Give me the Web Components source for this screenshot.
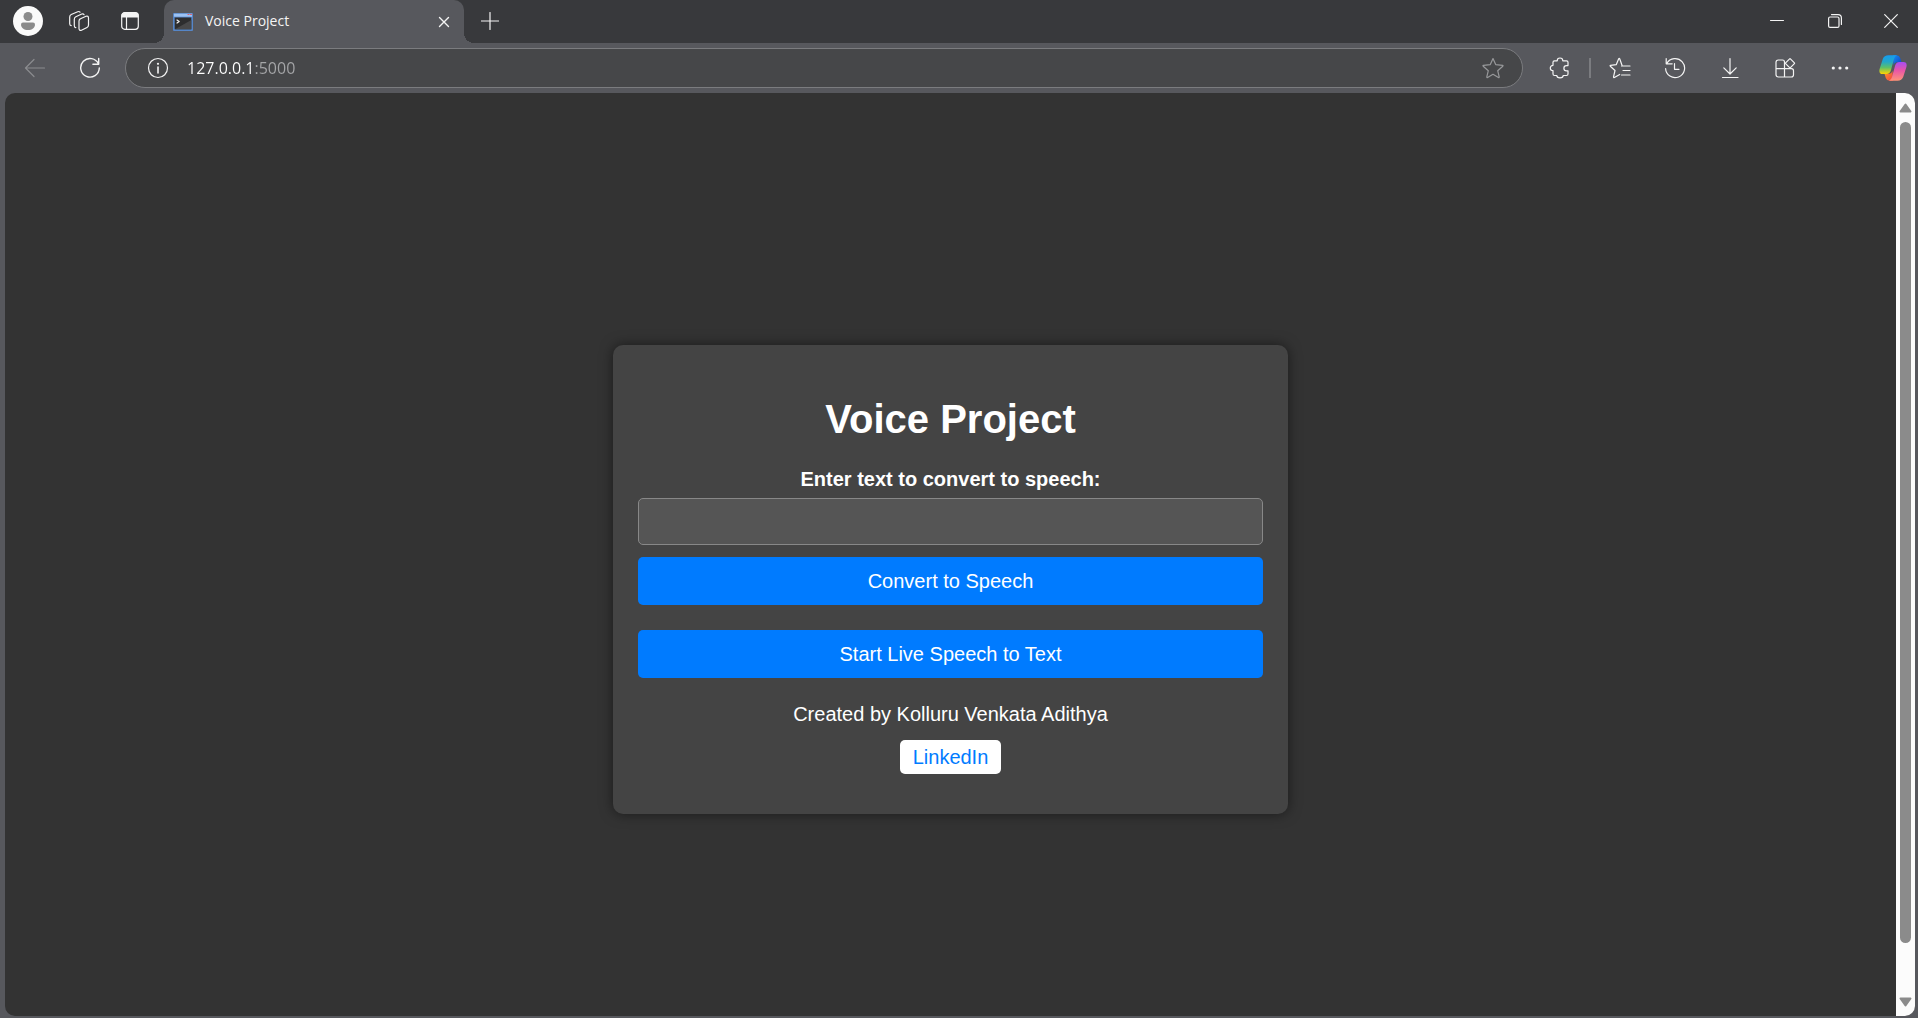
<!DOCTYPE html>
<html lang="en">
<head>
<meta charset="utf-8">
<title>Voice Project</title>
<style>
  html, body { height: 100%; margin: 0; }
  body { background: #57585d; overflow: hidden; }
</style>
</head>
<body>
<browser-window>
  <tab-strip slot="tabs"><browser-tab>Voice Project</browser-tab></tab-strip>
  <tool-bar slot="tools"></tool-bar>
  <page-view>
    <voice-card>
      <span slot="title">Voice Project</span>
      <span slot="author">Created by Kolluru Venkata Adithya</span>
    </voice-card>
  </page-view>
</browser-window>

<script>
const define = (name, html) => customElements.define(name, class extends HTMLElement {
  constructor() {
    super();
    this.attachShadow({ mode: 'open' }).innerHTML = html;
  }
});

const ICONS = {
  avatar: [30, 30, '<circle cx="15" cy="15" r="15" fill="#fafafa" stroke="none"/><circle cx="15" cy="10.500" r="4.500" fill="#8b8b8b" stroke="none"/><path d="M8 18.500a2 2 0 0 1 2-2h10a2 2 0 0 1 2 2c0 3.500-3 5.500-7 5.500s-7-2-7-5.500z" fill="#8b8b8b" stroke="none"/>'],
  collections: [22, 22, '<path d="M11.500 9.300 18 6.300q2.300-.8 2.500 1.700v7q0 1.800-1.500 2.500l-5.500 2.700q-2.300.8-2.500-1.700v-7.200q0-1.500.8-1.900z"/><path d="M7.800 17.700q-1.500-.4-1.500-2V9.200q0-1.800 1.500-2.500l6-2.700q1.500-.6 2.300.7"/><path d="M3.200 15.700q-1.500-.4-1.500-2V7q0-1.800 1.500-2.500L9.700 1.700q1.500-.6 2.300.5"/>'],
  panes: [20, 20, '<rect x="1.700" y="1.700" width="16.600" height="16.600" rx="3"/><path d="M2 4.500Q2 2 4.500 2h11Q18 2 18 4.500v1.500H2z" fill="currentColor"/><path d="M6.500 6v12"/>'],
  console: [20, 18, '<rect width="20" height="18" rx="1" fill="#5686c8" stroke="none"/><path d="M1 .7h18v3H1z" fill="#9cc2f2" stroke="none"/><path d="M15 1.500h1M17.500 1.500h1" stroke="#e0616c"/><path d="M1.700 4.500h16.600v11.800H1.700z" fill="#2d2d2e" stroke="none"/><path d="M2 16.200 18.300 7v9.200z" fill="#484849" stroke="none"/><path d="m4 7 2.200 1.500L4 10" stroke="#f0f0f0"/>'],
  tabclose: [12, 12, '<path d="m1.500 1.500 9 9M10.500 1.500l-9 9" stroke-width="1.400"/>'],
  plus: [18, 18, '<path d="M9 .5v17M.5 9h17"/>'],
  min: [14, 14, '<path d="M.5 6.500h13" stroke-width="1"/>'],
  restore: [14, 14, '<rect x=".6" y="3" width="10.400" height="10.400" rx="1.500" stroke-width="1.200"/><path d="M3.500.6H10Q13.400.6 13.400 4v6.500" stroke-width="1.200"/>'],
  close: [14, 14, '<path d="m.7.700 12.600 12.600M13.300.7.700 13.300" stroke-width="1.200"/>'],
  back: [22, 20, '<path d="M20.500 10h-19M10 1.500 1.500 10l8.500 8.500" stroke="#8b8c8f"/>'],
  reload: [22, 22, '<path d="M19.500 7A9.300 9.300 0 1 0 20.300 11M19.700 1.500v5.800h-5.800" stroke-width="1.400"/>'],
  info: [22, 22, '<circle cx="11" cy="11" r="9.500"/><path d="M11 10v6" stroke-width="1.600"/><circle cx="11" cy="6.800" r="1.100" fill="currentColor" stroke="none"/>'],
  star: [22, 22, '<path d="m11 1.500 2.700 6.100 6.900.7q.8.200.2.900l-5.100 4.500 1.500 6.200q.1 1-.8.600L11 17.300l-5.400 3.200q-.9.400-.8-.6l1.500-6.200L1.200 9.200q-.6-.7.200-.9l6.900-.7z" stroke="#97989a"/>'],
  puzzle: [22, 22, '<path d="M5.500 3.800h2.700a2.800 2.800 0 0 1 5.600 0h3.700q1.500 0 1.500 1.500v3.300h-1.500a2.600 2.600 0 0 0 0 5.200H19V17q0 1.500-1.500 1.500h-3.300a3.200 2.300 0 0 1-6.400 0H5.500Q4 18.500 4 17v-3.300a2.700 2.700 0 0 1 0-5.400V5.300Q4 3.800 5.500 3.800z"/>'],
  favs: [22, 22, '<path d="M13 8.300 10.700 1.800q-.5-.8-1 0L7.200 7.700l-5.600.6q-.9.300-.3.900l4.700 4.300-1.500 6.300q0 .9.900.7l5.300-3M12.500 9H21M14 13.500h7M12.500 18H21"/>'],
  history: [22, 22, '<path d="M2.800 6.500A9.500 9.500 0 1 1 1.600 11.500M2.200 1.500v5.300h6M10.500 6.500v5.800h4.500"/>'],
  download: [22, 22, '<path d="M11 1.500v15M4.800 10.800l6.200 6.200 6.200-6.200M3.500 20.500h15.500"/>'],
  apps: [22, 22, '<path d="M10.500 20H4.500Q2 20 2 17.500V5.300Q2 3 4.300 3h4.200q2 0 2 2v15h6.800q2.200 0 2.200-2.200v-4q0-2.100-2-2.100H2"/><path d="M15.600 1.800q.4-.4.800 0l4 4q.4.400 0 .8l-4 4q-.4.400-.8 0l-4-4q-.4-.4 0-.8z" fill="#57585d"/>'],
  more: [22, 22, '<g fill="currentColor" stroke="none"><circle cx="4.300" cy="11" r="1.600"/><circle cx="11" cy="11" r="1.600"/><circle cx="17.700" cy="11" r="1.600"/></g>'],
  copilot: [28, 26, `<defs>
    <linearGradient id="a" x1="0" y1="0" x2="0" y2="1"><stop offset="0" stop-color="#159cf0"/><stop offset=".35" stop-color="#23a7c9"/><stop offset=".65" stop-color="#5cc06a"/><stop offset="1" stop-color="#ffd400"/></linearGradient>
    <linearGradient id="b" x1="0" y1="0" x2="0" y2="1"><stop offset="0" stop-color="#a64df5"/><stop offset=".45" stop-color="#e955a8"/><stop offset="1" stop-color="#ff9378"/></linearGradient>
    <linearGradient id="c" x1="0" y1="0" x2="1" y2="1"><stop offset="0" stop-color="#1b8ef2"/><stop offset="1" stop-color="#0b3fc4"/></linearGradient>
    <linearGradient id="d" x1="0" y1="0" x2="1" y2="1"><stop offset="0" stop-color="#ff9a24"/><stop offset="1" stop-color="#ef4048"/></linearGradient></defs>
    <g stroke="none"><path d="M14 .3h3.500Q20.300.3 21.200 3l1.300 4.300H18q-2.500 0-3.500 3z" fill="url(#c)"/>
    <path d="M14 25.700h-3.500Q7.700 25.700 6.800 23l-1.300-4.300H10q2.500 0 3.500-3z" fill="url(#d)"/>
    <path d="M9.500.3H18q-2.200.7-3 3.700L12 15q-1 4-4.500 4H3.500Q-.5 19 .6 14L3.800 4Q5.200.3 9.500.3z" fill="url(#a)"/>
    <path d="M18.500 25.700H10q2.200-.7 3-3.700l3-11q1-4 4.500-4h4q4 0 2.900 5l-3.200 10q-1.400 3.700-5.700 3.700z" fill="url(#b)"/></g>`]
};
customElements.define('ui-icon', class extends HTMLElement {
  connectedCallback() {
    const [w, h, body] = ICONS[this.getAttribute('name')];
    if (!this.shadowRoot) this.attachShadow({ mode: 'open' });
    this.shadowRoot.innerHTML = `<style>:host{display:block;flex:none}svg{display:block}</style>
      <svg width="${w}" height="${h}" viewBox="0 0 ${w} ${h}" fill="none" stroke="currentColor" stroke-width="1.200" stroke-linecap="round" stroke-linejoin="round" aria-hidden="true">${body}</svg>`;
  }
});

const BUTTON = `button{all:unset;box-sizing:border-box;display:flex;align-items:center;justify-content:center;flex:none;height:100%;color:inherit}`;

define('browser-window', `<style>
  :host{display:flex;flex-direction:column;height:100vh;background:#57585d;color:#f4f4f4;font-family:"Segoe UI","Open Sans",sans-serif}
  main{flex:1;min-height:0;display:flex;padding:0 3px 2px 5px}
  ::slotted(page-view){flex:1}
</style><slot name="tabs"></slot><slot name="tools"></slot><main><slot></slot></main>`);

define('tab-strip', `<style>
  :host{display:flex;flex:none;height:43px;background:#38393c}
  ${BUTTON}
  .left{display:flex;padding:0 9px 2px 2px}
  .left button{width:51px}
  .add{width:52px;padding-bottom:2px}
  .win{display:flex;margin-left:auto;padding-bottom:1px}
  .win button{width:58px}
  .win button:last-child{width:54px}
</style>
<div class="left"><button aria-label="Profile"><ui-icon name="avatar"></ui-icon></button><button aria-label="Workspaces"><ui-icon name="collections"></ui-icon></button><button aria-label="Tab actions"><ui-icon name="panes"></ui-icon></button></div>
<slot></slot>
<button class="add" aria-label="New tab"><ui-icon name="plus"></ui-icon></button>
<div class="win"><button aria-label="Minimize"><ui-icon name="min"></ui-icon></button><button aria-label="Restore"><ui-icon name="restore"></ui-icon></button><button aria-label="Close"><ui-icon name="close"></ui-icon></button></div>`);

define('browser-tab', `<style>
  :host{position:relative;display:flex;align-items:center;box-sizing:border-box;width:300px;padding:0 4px 0 9px;background:#57585d;border-radius:10px 10px 0 0;font-size:14px;line-height:20px}
  :host::before,:host::after{content:"";position:absolute;bottom:0;width:10px;height:10px}
  :host::before{right:100%;background:radial-gradient(circle at 0 0,transparent 10px,#57585d 10px)}
  :host::after{left:100%;background:radial-gradient(circle at 100% 0,transparent 10px,#57585d 10px)}
  .t{flex:1;padding:0 0 2px 12px}
  ${BUTTON}
  button{width:32px}
</style><ui-icon name="console"></ui-icon><span class="t"><slot></slot></span><button aria-label="Close tab"><ui-icon name="tabclose"></ui-icon></button>`);

define('tool-bar', `<style>
  :host{display:flex;align-items:center;flex:none;height:50px;padding-left:7px}
  ${BUTTON}
  button{width:55px}
  .url{flex:1;display:flex;align-items:center;box-sizing:border-box;height:40px;margin:0 9px 0 8px;padding:0 18px 0 21px;background:#464749;border:1px solid #7b7c7f;border-radius:20px}
  .url button{width:22px}
  input{flex:1;min-width:0;margin:0 18px;padding:0;border:0;outline:0;font:16px/24px "Segoe UI","Open Sans",sans-serif;color:#fff;-webkit-text-fill-color:transparent;background:linear-gradient(90deg,#fff 68px,#a5a6a8 68px);-webkit-background-clip:text;background-clip:text}
  .sep{flex:none;width:2px;height:20px;margin:0 1px 0 2px;background:#7b7c80}
  .copilot{width:51px}
</style>
<button aria-label="Back"><ui-icon name="back"></ui-icon></button><button aria-label="Refresh"><ui-icon name="reload"></ui-icon></button>
<div class="url"><button aria-label="Site information"><ui-icon name="info"></ui-icon></button><input type="text" aria-label="Address" value="127.0.0.1:5000" spellcheck="false"><button aria-label="Add to favorites"><ui-icon name="star"></ui-icon></button></div>
<button aria-label="Extensions"><ui-icon name="puzzle"></ui-icon></button><span class="sep"></span>
<button aria-label="Favorites"><ui-icon name="favs"></ui-icon></button><button aria-label="History"><ui-icon name="history"></ui-icon></button><button aria-label="Downloads"><ui-icon name="download"></ui-icon></button><button aria-label="Apps"><ui-icon name="apps"></ui-icon></button><button aria-label="More"><ui-icon name="more"></ui-icon></button><button class="copilot" aria-label="Copilot"><ui-icon name="copilot"></ui-icon></button>`);

define('page-view', `<style>
  :host{display:flex;overflow:hidden;background:#333;border-radius:10px}
  .view{flex:1;overflow:hidden}
  .body{display:flex;align-items:center;justify-content:center;min-height:100%;padding:25px 0}
</style><div class="view"><div class="body"><slot></slot></div></div><scroll-bar></scroll-bar>`);

define('scroll-bar', `<style>
  :host{display:flex;flex-direction:column;align-items:center;flex:none;width:19px;padding:10px 0 9px;box-sizing:border-box;background:#fcfcfc}
  svg{display:block;flex:none}
  .track{flex:1;display:flex;flex-direction:column;padding:9px 0 2px}
  .thumb{flex:94;width:11px;border-radius:6px;background:#8b8b8b}
  .rest{flex:6}
</style>
<svg width="13" height="10" viewBox="0 0 13 10"><path d="M6.500 1.500 11.500 8.500h-10z" fill="#8b8b8b" stroke="#8b8b8b" stroke-width="2" stroke-linejoin="round"/></svg>
<div class="track"><div class="thumb"></div><div class="rest"></div></div>
<svg width="13" height="10" viewBox="0 0 13 10"><path d="M6.500 8.500 11.500 1.500h-10z" fill="#8b8b8b" stroke="#8b8b8b" stroke-width="2" stroke-linejoin="round"/></svg>`);

define('voice-card', `<style>
  :host{display:block;box-sizing:border-box;width:675px;max-width:100%;padding:25px 25px 40px;background:#444;border-radius:10px;box-shadow:0 0 13px rgba(0,0,0,.5);color:#fff;text-align:center;font:20px/23px Arial,"Liberation Sans",sans-serif}
  h1{margin:26px 0;font-size:40px;line-height:46px}
  label{display:block;margin-bottom:7px;font-weight:bold}
  input,button{display:block;box-sizing:border-box;width:100%;margin:0;border-radius:5px;font:inherit;color:#fff}
  input{height:47px;padding:12px;border:1px solid #888;background:#555}
  button{height:48px;padding:12px;border:0;background:#007bff}
  form button{margin:12px 0 25px}
  p{margin:25px 0 14px}
  a{display:inline-block;vertical-align:top;padding:6px 13px;border-radius:5px;background:#fff;color:#007bff;line-height:22px;text-decoration:none}
</style>
<h1><slot name="title"></slot></h1>
<form><label for="text">Enter text to convert to speech:</label><input id="text" type="text"><button type="button">Convert to Speech</button></form>
<button type="button">Start Live Speech to Text</button>
<p><slot name="author"></slot></p>
<a href="#linkedin">LinkedIn</a>`);
</script>
</body>
</html>
